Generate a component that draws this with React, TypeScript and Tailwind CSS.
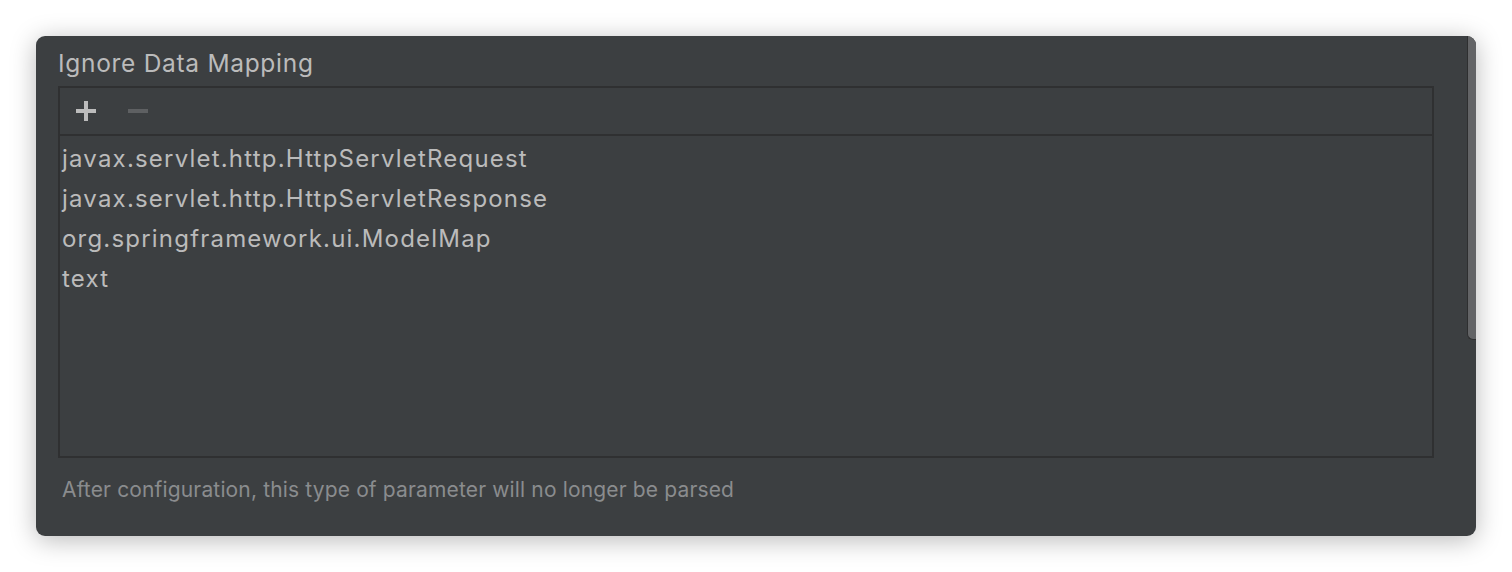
import React from "react";

const rows = [
  "javax.servlet.http.HttpServletRequest",
  "javax.servlet.http.HttpServletResponse",
  "org.springframework.ui.ModelMap",
  "text",
];

export default function App() {
  return (
    <div className="w-[1512px] h-[572px] bg-white pt-[36px] pl-[36px] [font-family:Inter,'Noto_Sans',sans-serif]">
      <div className="w-[1440px] h-[500px] bg-[#3c3f41] rounded-[9px] shadow-[0_4px_26px_rgba(0,0,0,0.28)] flex overflow-hidden">
        <div className="flex-1 pl-[22px] pr-[33px] flex flex-col">
          <div className="pt-[12px] h-[50px] text-[24.5px] tracking-[0.7px] leading-[30px] text-[#bbbbbb]">
            Ignore Data Mapping
          </div>
          <div className="border-2 border-[#2f3031] flex flex-col">
            <div className="h-[48px] flex items-center pl-[16px] gap-[32px] border-b-2 border-[#2f3031]">
              <svg width="20" height="20" viewBox="0 0 20 20">
                <rect x="8" y="0" width="4" height="20" fill="#bcbcbc" />
                <rect x="0" y="8" width="20" height="4" fill="#bcbcbc" />
              </svg>
              <svg width="20" height="20" viewBox="0 0 20 20">
                <rect x="0" y="8" width="20" height="4" fill="#5e6062" />
              </svg>
            </div>
            <div className="h-[320px] pt-[3px] pl-[2px] text-[24px] tracking-[1.2px] text-[#bbbbbb]">
              {rows.map((r) => (
                <div key={r} className="h-[40px] leading-[40px]">
                  {r}
                </div>
              ))}
            </div>
          </div>
          <div className="mt-[20px] pl-[4px] text-[21px] tracking-[0.15px] leading-[24px] text-[#8a8c8e]">
            After configuration, this type of parameter will no longer be parsed
          </div>
        </div>
        <div className="w-[9px] flex flex-col">
          <div className="h-[304px] bg-[#636466] rounded-bl-[6px] border-l border-b border-[#2e2f30]" />
        </div>
      </div>
    </div>
  );
}
